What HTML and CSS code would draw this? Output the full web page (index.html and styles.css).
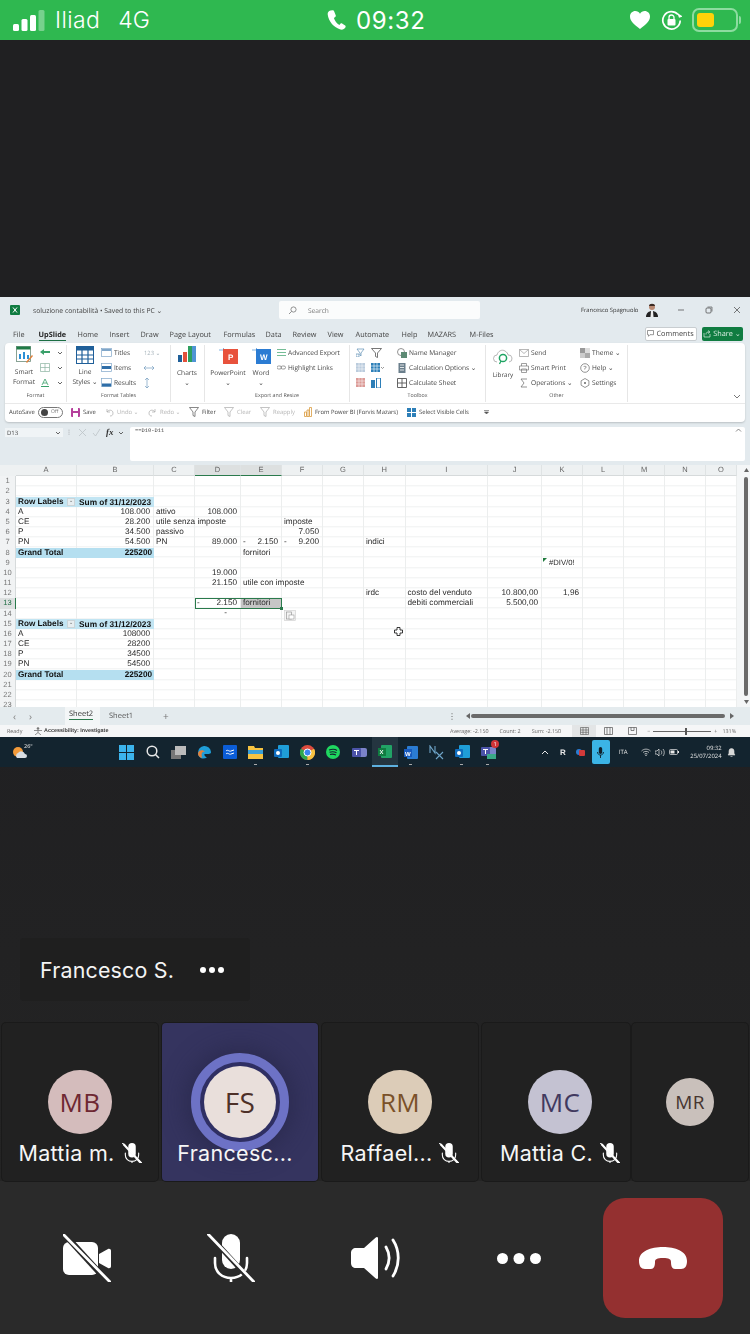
FILE: index.html
```html
<!DOCTYPE html>
<html lang="it">
<head>
<meta charset="utf-8">
<title>Teams call</title>
<link rel="stylesheet" href="styles.css">
</head>
<body>
<svg class="defs" width="0" height="0">
  <symbol id="micoff" viewBox="0 0 48 48">
    <rect x="15" y="0" width="18" height="35" rx="9" fill="#fff"/>
    <path d="M8 24v5c0 9 7 15 16 15s16-6 16-15v-5M24 44v4" fill="none" stroke="#fff" stroke-width="2.6" stroke-linecap="round"/>
    <path d="M4 3l42 46" stroke="currentColor" stroke-width="5"/>
    <path d="M1 0l46 48" stroke="#fff" stroke-width="2.8" stroke-linecap="round"/>
  </symbol>
  <symbol id="dot3" viewBox="0 0 44 11">
    <circle cx="5.500" cy="5.500" r="5.500" fill="#fff"/><circle cx="22" cy="5.500" r="5.500" fill="#fff"/><circle cx="38.500" cy="5.500" r="5.500" fill="#fff"/>
  </symbol>
  <symbol id="caret" viewBox="0 0 6 4"><path d="M1 1l2 2 2-2" fill="none" stroke="#555" stroke-width=".9"/></symbol>
</svg>

<header class="status">
  <div class="st-left">
    <svg class="st-signal" width="32" height="21" viewBox="0 0 32 21"><rect x="0" y="14" width="6" height="7" rx="1.5" fill="#fff"/><rect x="8.500" y="9" width="6" height="12" rx="1.500" fill="#fff"/><rect x="17" y="5" width="6" height="16" rx="1.500" fill="#fff"/><rect x="25.500" y="0" width="6" height="21" rx="1.500" fill="#fff" opacity=".35"/></svg>
    <span class="st-carrier">Iliad</span>
    <span class="st-net">4G</span>
  </div>
  <div class="st-center">
    <svg width="19" height="20" viewBox="0 0 19 20"><path d="M3.500.5C1.500 1 .5 2.500.7 4.500 1.500 11.500 7 17.500 13.500 19.500c2 .5 4-.5 5-2.300.3-.6.200-1.200-.4-1.600l-3-2c-.6-.4-1.200-.3-1.700.2l-1 1.100c-2.600-1.400-4.700-4.200-5.500-7l1.300-.8c.6-.4.800-1 .6-1.600L7.200 1.500C7 .7 6.300.2 5.500.2z" fill="#fff"/></svg>
    <span class="st-time">09:32</span>
  </div>
  <div class="st-right">
    <svg width="20" height="18" viewBox="0 0 20 18"><path d="M10 18C4 13.500 0 10 0 5.500 0 2.300 2.400 0 5.300 0 7.300 0 9 1 10 2.800 11 1 12.700 0 14.700 0 17.600 0 20 2.300 20 5.500 20 10 16 13.500 10 18z" fill="#fff"/></svg>
    <svg width="21" height="21" viewBox="0 0 21 21"><path d="M17 4.500A8.700 8.700 0 1 0 19.200 10.500" fill="none" stroke="#fff" stroke-width="1.700"/><path d="M15 5h5V1z" fill="#fff" transform="rotate(70 17 5)"/><rect x="6.500" y="9" width="8" height="6.500" rx="1" fill="#fff"/><path d="M8 9V7.500a2.500 2.500 0 0 1 5 0V9" fill="none" stroke="#fff" stroke-width="1.300"/></svg>
    <div class="batt"><span class="batt-fill"></span></div>
    <span class="batt-nub"></span>
  </div>
</header>

<main class="stage">
  <section class="share">
    <div class="titlebar">
      <svg class="xl" width="10" height="10" viewBox="0 0 10 10"><rect width="10" height="10" rx="1" fill="#107c41"/><path d="M3 2.500l4 5M7 2.500l-4 5" stroke="#fff" stroke-width="1"/></svg>
      <span class="doc">soluzione contabilità • Saved to this PC ⌄</span>
      <div class="search">
        <svg width="9" height="9" viewBox="0 0 9 9"><circle cx="5.500" cy="3.500" r="2.600" fill="none" stroke="#666" stroke-width=".7"/><path d="M3.500 5.500L1 8" stroke="#666" stroke-width=".7"/></svg>
        <span>Search</span>
      </div>
      <span class="user">Francesco Spagnuolo</span>
      <svg class="user-pic" width="12" height="14" viewBox="0 0 12 14"><circle cx="6" cy="4" r="3" fill="#b98a73"/><path d="M3 3c0-3 6-3 6 0z" fill="#3a2a24"/><path d="M0 14c0-4 3-6 6-6s6 2 6 6z" fill="#222"/><path d="M5 8h2l.5 6h-3z" fill="#eee"/></svg>
      <div class="winbtns">
        <svg width="8" height="8" viewBox="0 0 8 8"><path d="M1 4h6" stroke="#444" stroke-width=".7"/></svg>
        <svg width="8" height="8" viewBox="0 0 8 8"><rect x="1" y="2" width="5" height="5" rx="1" fill="none" stroke="#444" stroke-width=".7"/><path d="M2.500 1H7v4.500" fill="none" stroke="#444" stroke-width=".6"/></svg>
        <svg width="8" height="8" viewBox="0 0 8 8"><path d="M1 1l6 6M7 1L1 7" stroke="#444" stroke-width=".7"/></svg>
      </div>
    </div>

    <nav class="tabs">
      <span class="tab t-file">File</span>
      <span class="tab t-on">UpSlide</span>
      <span class="tab t-home">Home</span>
      <span class="tab t-ins">Insert</span>
      <span class="tab t-draw">Draw</span>
      <span class="tab t-page">Page Layout</span>
      <span class="tab t-form">Formulas</span>
      <span class="tab t-data">Data</span>
      <span class="tab t-rev">Review</span>
      <span class="tab t-view">View</span>
      <span class="tab t-auto">Automate</span>
      <span class="tab t-help">Help</span>
      <span class="tab t-maz">MAZARS</span>
      <span class="tab t-mf">M-Files</span>
      <span class="comments">
        <svg width="7" height="7" viewBox="0 0 7 7"><path d="M.5.500h6v4.200H3L1.500 6.300V4.700h-1z" fill="none" stroke="#555" stroke-width=".6"/></svg>Comments
      </span>
      <span class="sharebtn">
        <svg width="8" height="8" viewBox="0 0 8 8"><path d="M1 3v4h6V4M3 4.500C3 2.500 4 2 6 2M5 .5L7 2 5 3.500" fill="none" stroke="#fff" stroke-width=".6"/></svg>Share ⌄
      </span>
    </nav>

    <div class="ribbon">
      <div class="rib-top">
        <div class="grp g-format">
          <div class="grp-body">
            <div class="big b-smart">
              <svg width="17" height="18" viewBox="0 0 17 18"><rect x=".5" y=".5" width="14" height="15" fill="#fff" stroke="#6b8c7a" stroke-width=".8"/><rect x=".5" y=".5" width="14" height="3" fill="#1e7a46"/><path d="M3 13V8h2v5zM7 13V6h2v7zM11 13V9h2v4z" fill="#2d8fd5"/><path d="M10 16l6-7 1 1-6 7z" fill="#e2813b"/></svg>
              <span>Smart<br>Format</span>
            </div>
            <div class="mini-col">
              <div class="mini"><svg width="10" height="9" viewBox="0 0 10 9"><path d="M0 4l4-3v6zM4 3h6v2H4z" fill="#3aa06a"/></svg><svg class="cr" width="6" height="4"><use href="#caret"/></svg></div>
              <div class="mini"><svg width="10" height="9" viewBox="0 0 10 9"><path d="M.5.500h9v8h-9zM.5 4.500h9M5 .5v8" fill="none" stroke="#8bb3a0" stroke-width=".7"/></svg><svg class="cr" width="6" height="4"><use href="#caret"/></svg></div>
              <div class="mini"><svg width="10" height="9" viewBox="0 0 10 9"><path d="M2 7l3-6 3 6M3 5h4" fill="none" stroke="#3aa06a" stroke-width=".8"/><path d="M1 8.500h8" stroke="#3aa06a"/></svg><svg class="cr" width="6" height="4"><use href="#caret"/></svg></div>
            </div>
          </div>
          <div class="grp-label">Format</div>
        </div>

        <div class="grp g-tables">
          <div class="grp-body">
            <div class="big b-line">
              <svg width="18" height="18" viewBox="0 0 18 18"><rect x=".5" y=".5" width="17" height="17" fill="#fff" stroke="#1f5f99"/><rect x=".5" y=".5" width="17" height="4" fill="#1f5f99"/><path d="M0 9h18M0 13h18M6 4v14M12 4v14" stroke="#1f5f99" stroke-width="1.200"/></svg>
              <span>Line<br>Styles ⌄</span>
            </div>
            <div class="list l-tables">
              <div class="li"><svg width="11" height="9" viewBox="0 0 11 9"><rect x=".5" y=".5" width="10" height="8" fill="#fff" stroke="#7fa6c9" stroke-width=".7"/><rect x="1" y="1" width="9" height="2" fill="#7fa6c9"/></svg>Titles</div>
              <div class="li"><svg width="11" height="9" viewBox="0 0 11 9"><rect x=".5" y=".5" width="10" height="8" fill="#fff" stroke="#7fa6c9" stroke-width=".7"/><rect x="1" y="3" width="9" height="3" fill="#2f6ea8"/></svg>Items</div>
              <div class="li"><svg width="11" height="9" viewBox="0 0 11 9"><rect x=".5" y=".5" width="10" height="8" fill="#fff" stroke="#7fa6c9" stroke-width=".7"/><rect x="1" y="5.500" width="9" height="3" fill="#2f6ea8"/></svg>Results</div>
            </div>
            <div class="list l-num">
              <div class="li li-dim">123 ⌄</div>
              <div class="li"><svg width="10" height="6" viewBox="0 0 10 6"><path d="M0 3h10M2 1L0 3l2 2M8 1l2 2-2 2" fill="none" stroke="#5f8fb5" stroke-width=".6"/></svg></div>
              <div class="li"><svg width="6" height="10" viewBox="0 0 6 10"><path d="M3 0v10M1 2l2-2 2 2M1 8l2 2 2-2" fill="none" stroke="#5f8fb5" stroke-width=".6"/></svg></div>
            </div>
          </div>
          <div class="grp-label">Format Tables</div>
        </div>

        <div class="grp g-charts">
          <div class="grp-body">
            <div class="big b-charts">
              <svg width="18" height="19" viewBox="0 0 18 19"><rect x="0" y="9" width="4" height="7" fill="#1f5f99"/><rect x="5" y="6" width="4" height="10" fill="#e2513b"/><rect x="10" y="0" width="4" height="16" fill="#2d9f5f"/><rect x="14" y="0" width="4" height="16" fill="#4f94d4"/></svg>
              <span>Charts<br>⌄</span>
            </div>
          </div>
        </div>

        <div class="grp g-export">
          <div class="grp-body">
            <div class="big b-ppt">
              <svg width="19" height="19" viewBox="0 0 19 19"><path d="M0 4h6M4 2l2 2-2 2" fill="none" stroke="#4f94d4" stroke-width=".7"/><rect x="4" y="3" width="15" height="15" fill="#e8523c"/><text x="9" y="13.500" class="ico-t">P</text></svg>
              <span>PowerPoint<br>⌄</span>
            </div>
            <div class="big b-word">
              <svg width="19" height="19" viewBox="0 0 19 19"><path d="M0 4h6M4 2l2 2-2 2" fill="none" stroke="#4f94d4" stroke-width=".7"/><rect x="4" y="3" width="15" height="15" fill="#2b7cd3"/><text x="8" y="13.500" class="ico-t">W</text></svg>
              <span>Word<br>⌄</span>
            </div>
            <div class="list l-export">
              <div class="li"><svg width="9" height="9" viewBox="0 0 9 9"><path d="M0 1.500h9M0 4.500h9M0 7.500h9" stroke="#3aa06a" stroke-width=".7"/></svg>Advanced Export</div>
              <div class="li"><svg width="9" height="9" viewBox="0 0 9 9"><rect x="0" y="3" width="4.500" height="3" rx="1.500" fill="none" stroke="#777" stroke-width=".7"/><rect x="4" y="3" width="4.500" height="3" rx="1.500" fill="none" stroke="#777" stroke-width=".7"/></svg>Highlight Links</div>
            </div>
          </div>
          <div class="grp-label">Export and Resize</div>
        </div>

        <div class="grp g-toolbox">
          <div class="grp-body">
            <div class="tb-icons">
              <svg width="9" height="9" viewBox="0 0 9 9"><path d="M1 1h7L5 5v3L4 7V5zM0 6h3v3H0z" fill="none" stroke="#5f8fb5" stroke-width=".7"/></svg>
              <svg width="11" height="10" viewBox="0 0 11 10"><path d="M.5.500h10L6.500 5v4.500l-2-1V5z" fill="none" stroke="#555" stroke-width=".8"/></svg>
              <svg width="9" height="9" viewBox="0 0 9 9"><path d="M0 0h9v9H0z" fill="#bcd" /><path d="M3 0v9M6 0v9M0 3h9M0 6h9" stroke="#fff" stroke-width=".5"/></svg>
              <svg width="13" height="9" viewBox="0 0 13 9"><rect width="9" height="9" fill="#2d7fb8"/><path d="M3 0v9M6 0v9M0 3h9M0 6h9" stroke="#fff" stroke-width=".6"/><path d="M10 4l1.500 1.500L13 4" fill="none" stroke="#555" stroke-width=".6"/></svg>
              <svg width="9" height="9" viewBox="0 0 9 9"><path d="M0 0h9v9H0z" fill="#dc9a96"/><path d="M3 0v9M6 0v9M0 3h9M0 6h9" stroke="#fff" stroke-width=".5"/></svg>
              <svg width="10" height="10" viewBox="0 0 10 10"><rect x="0" y="2" width="4" height="8" fill="#2d7fb8"/><rect x="5.500" y="0" width="4" height="10" fill="none" stroke="#2d7fb8"/></svg>
            </div>
            <div class="list l-tool">
              <div class="li"><svg width="10" height="10" viewBox="0 0 10 10"><circle cx="4" cy="4" r="3.500" fill="none" stroke="#777" stroke-width=".8"/><rect x="4" y="4" width="6" height="6" fill="#5d8a74"/></svg>Name Manager</div>
              <div class="li"><svg width="10" height="10" viewBox="0 0 10 10"><rect x="1.500" y="0" width="7" height="10" fill="#6b7f8c"/><path d="M3 2h4M3 4.500h4M3 7h4" stroke="#fff" stroke-width=".8"/></svg>Calculation Options ⌄</div>
              <div class="li"><svg width="10" height="10" viewBox="0 0 10 10"><path d="M.5.500h9v9h-9zM5 .5v9M.5 5h9" fill="none" stroke="#555" stroke-width=".9"/></svg>Calculate Sheet</div>
            </div>
          </div>
          <div class="grp-label">Toolbox</div>
        </div>

        <div class="grp g-other">
          <div class="grp-body">
            <div class="big b-lib">
              <svg width="20" height="17" viewBox="0 0 20 17"><path d="M4 13a3.500 3.500 0 0 1 0-7C5 2 9 0 12 2c2 1 3 3 3 4a3.500 3.500 0 0 1 1 7" fill="none" stroke="#999" stroke-width=".7"/><circle cx="10" cy="9" r="3.600" fill="none" stroke="#1fa463" stroke-width="1.500"/><path d="M8 12l-1.500 3" stroke="#1fa463" stroke-width="1.300"/></svg>
              <span>Library</span>
            </div>
            <div class="list l-send">
              <div class="li"><svg width="10" height="8" viewBox="0 0 10 8"><path d="M.5.500h9v7h-9zM.5.500L5 4.500 9.500.5" fill="none" stroke="#999" stroke-width=".7"/></svg>Send</div>
              <div class="li"><svg width="10" height="10" viewBox="0 0 10 10"><path d="M2.500 3V.5h5V3M.5 3h9v4h-9zM2.500 6h5v3.500h-5z" fill="none" stroke="#777" stroke-width=".7"/></svg>Smart Print</div>
              <div class="li"><svg width="10" height="10" viewBox="0 0 10 10"><path d="M8 1H2l3 4-3 4h6" fill="none" stroke="#666" stroke-width=".7"/></svg>Operations ⌄</div>
            </div>
            <div class="list l-theme">
              <div class="li"><svg width="10" height="10" viewBox="0 0 10 10"><rect width="5" height="5" fill="#999"/><rect x="5" width="5" height="5" fill="#ddd"/><rect y="5" width="5" height="5" fill="#ccc"/><rect x="5" y="5" width="5" height="5" fill="#aaa"/></svg>Theme ⌄</div>
              <div class="li"><svg width="10" height="10" viewBox="0 0 10 10"><circle cx="5" cy="5" r="4.300" fill="none" stroke="#666" stroke-width=".7"/><text x="3.300" y="7.200" class="ico-q">?</text></svg>Help ⌄</div>
              <div class="li"><svg width="10" height="10" viewBox="0 0 10 10"><path d="M5 .5l3.900 2.300v4.400L5 9.500 1.100 7.200V2.800z" fill="none" stroke="#666" stroke-width=".7"/><circle cx="5" cy="5" r="1" fill="#666"/></svg>Settings</div>
            </div>
          </div>
          <div class="grp-label">Other</div>
        </div>

        <div class="rib-end"><svg width="8" height="5" viewBox="0 0 8 5"><path d="M1 1l3 3 3-3" fill="none" stroke="#555" stroke-width=".8"/></svg></div>
      </div>

      <div class="qat">
        <span class="q q-auto">AutoSave</span>
        <span class="toggle"><i></i>Off</span>
        <span class="q q-save"><svg width="9" height="9" viewBox="0 0 9 9"><rect width="9" height="9" rx="1" fill="#b5409c"/><rect x="2" y="0" width="5" height="3" fill="#fff"/><rect x="2" y="5" width="5" height="4" fill="#fff"/></svg>Save</span>
        <span class="q q-dim q-undo"><svg width="9" height="9" viewBox="0 0 9 9"><path d="M2 1v3h3M2 4c2-3 6-2 6 1 0 2-1 3-3 3" fill="none" stroke="#aaa" stroke-width=".7"/></svg>Undo ⌄</span>
        <span class="q q-dim q-redo"><svg width="9" height="9" viewBox="0 0 9 9"><path d="M7 1v3H4M7 4C5 1 1 2 1 5c0 2 1 3 3 3" fill="none" stroke="#aaa" stroke-width=".7"/></svg>Redo ⌄</span>
        <span class="q q-filter"><svg width="10" height="10" viewBox="0 0 10 10"><path d="M.5.500h9L6 5v4.500l-2-1V5z" fill="none" stroke="#555" stroke-width=".7"/></svg>Filter</span>
        <span class="q q-dim q-clear"><svg width="10" height="10" viewBox="0 0 10 10"><path d="M.5.500h9L6 5v4.500l-2-1V5z" fill="none" stroke="#aaa" stroke-width=".7"/></svg>Clear</span>
        <span class="q q-dim q-reap"><svg width="10" height="10" viewBox="0 0 10 10"><path d="M.5.500h9L6 5v4.500l-2-1V5z" fill="none" stroke="#aaa" stroke-width=".7"/></svg>Reapply</span>
        <span class="q q-pbi"><svg width="8" height="10" viewBox="0 0 8 10"><path d="M.5 5h2v4.500h-2zM3 3h2v6.500H3zM5.500.5h2v9h-2z" fill="none" stroke="#d99a3d" stroke-width=".8"/></svg>From Power BI (Forvis Mazars)</span>
        <span class="q q-vis"><svg width="9" height="9" viewBox="0 0 9 9"><path d="M0 0h4v4H0zM5 0h4v4H5zM0 5h4v4H0zM5 5h4v4H5z" fill="#2d7fb8"/></svg>Select Visible Cells</span>
        <svg class="q-more" width="5" height="5" viewBox="0 0 5 5"><path d="M0 .5h5M.5 2l2 2 2-2z" stroke="#555" stroke-width=".6" fill="#555"/></svg>
      </div>
    </div>

    <div class="fbar">
      <div class="namebox"><span>D13</span><svg width="6" height="4"><use href="#caret"/></svg></div>
      <span class="fb-dots">⋮</span>
      <svg class="fb-x" width="9" height="9" viewBox="0 0 9 9"><path d="M1 1l7 7M8 1L1 8" stroke="#bcc3c7" stroke-width=".8"/></svg>
      <svg class="fb-x" width="9" height="9" viewBox="0 0 9 9"><path d="M1 5l2.500 3L8 1" fill="none" stroke="#bcc3c7" stroke-width=".8"/></svg>
      <span class="fb-fx">fx</span>
      <svg class="fb-c" width="6" height="4"><use href="#caret"/></svg>
      <div class="finput"><span>==D10-D11</span><svg width="7" height="4" viewBox="0 0 7 4"><path d="M1 3.500L3.500 1 6 3.500" fill="none" stroke="#555" stroke-width=".7"/></svg></div>
    </div>

    <div class="sheetwrap">
      <div class="sheet">
        <div class="corner"></div>
        <div class="ch ca">A</div><div class="ch cb">B</div><div class="ch cc">C</div><div class="ch cd sel">D</div><div class="ch ce sel">E</div><div class="ch cf">F</div><div class="ch cg">G</div><div class="ch ch-h">H</div><div class="ch ci">I</div><div class="ch cj">J</div><div class="ch ck">K</div><div class="ch cl">L</div><div class="ch cm">M</div><div class="ch cn">N</div><div class="ch co">O</div>

        <i class="gl ca"></i><i class="gl cb"></i><i class="gl cc"></i><i class="gl cd"></i><i class="gl ce"></i><i class="gl cf"></i><i class="gl cg"></i><i class="gl ch-h"></i><i class="gl ci"></i><i class="gl cj"></i><i class="gl ck"></i><i class="gl cl"></i><i class="gl cm"></i><i class="gl cn"></i><i class="gl co"></i>

        <div class="rh r1">1</div><div class="rh r2">2</div><div class="rh r3">3</div><div class="rh r4">4</div><div class="rh r5">5</div><div class="rh r6">6</div><div class="rh r7">7</div><div class="rh r8">8</div><div class="rh r9">9</div><div class="rh r10">10</div><div class="rh r11">11</div><div class="rh r12">12</div><div class="rh r13 rh-sel">13</div><div class="rh r14">14</div><div class="rh r15">15</div><div class="rh r16">16</div><div class="rh r17">17</div><div class="rh r18">18</div><div class="rh r19">19</div><div class="rh r20">20</div><div class="rh r21">21</div><div class="rh r22">22</div><div class="rh r23">23</div>

        <div class="c r3 ca ph b">Row Labels<span class="fbtn">⌄</span></div><div class="c r3 cb ph b n">Sum of 31/12/2023</div>
        <div class="c r4 ca">A</div><div class="c r4 cb n">108.000</div><div class="c r4 cc">attivo</div><div class="c r4 cd n">108.000</div>
        <div class="c r5 ca">CE</div><div class="c r5 cb n">28.200</div><div class="c r5 cc">utile senza imposte</div><div class="c r5 cf">imposte</div>
        <div class="c r6 ca">P</div><div class="c r6 cb n">34.500</div><div class="c r6 cc">passivo</div><div class="c r6 cf n">7.050</div>
        <div class="c r7 ca">PN</div><div class="c r7 cb n">54.500</div><div class="c r7 cc">PN</div><div class="c r7 cd n">89.000</div><div class="c r7 ce ac"><span>-</span><span>2.150</span></div><div class="c r7 cf ac"><span>-</span><span>9.200</span></div><div class="c r7 ch-h">indici</div>
        <div class="c r8 ca pt b">Grand Total</div><div class="c r8 cb pt b n">225200</div><div class="c r8 ce">fornitori</div>
        <div class="c r9 ck err">#DIV/0!</div>
        <div class="c r10 cd n">19.000</div>
        <div class="c r11 cd n">21.150</div><div class="c r11 ce">utile con imposte</div>
        <div class="c r12 ch-h">irdc</div><div class="c r12 ci">costo del venduto</div><div class="c r12 cj n">10.800,00</div><div class="c r12 ck n">1,96</div>
        <div class="c r13 cd ac"><span>-</span><span>2.150</span></div><div class="c r13 ce fill">fornitori</div><div class="c r13 ci">debiti commerciali</div><div class="c r13 cj n">5.500,00</div>
        <div class="c r14 cd dash">-</div>
        <div class="c r15 ca ph b">Row Labels<span class="fbtn">⌄</span></div><div class="c r15 cb ph b n">Sum of 31/12/2023</div>
        <div class="c r16 ca">A</div><div class="c r16 cb n">108000</div>
        <div class="c r17 ca">CE</div><div class="c r17 cb n">28200</div>
        <div class="c r18 ca">P</div><div class="c r18 cb n">34500</div>
        <div class="c r19 ca">PN</div><div class="c r19 cb n">54500</div>
        <div class="c r20 ca pt b">Grand Total</div><div class="c r20 cb pt b n">225200</div>

        <div class="selbox r13"><i></i></div>
        <svg class="paste" width="12" height="11" viewBox="0 0 12 11"><rect x=".5" y=".5" width="11" height="10" fill="#f4f4f4" stroke="#ccc" stroke-width=".6"/><rect x="2.500" y="2" width="5" height="7" fill="none" stroke="#999" stroke-width=".7"/><rect x="5" y="5" width="5" height="4" fill="#fff" stroke="#999" stroke-width=".6"/></svg>
        <svg class="cursor" width="9" height="9" viewBox="0 0 9 9"><path d="M3 .5h3v2.500h2.500v3H6v2.500H3V6H.5V3H3z" fill="#fff" stroke="#222" stroke-width=".9"/></svg>
      </div>
      <div class="vscroll">
        <svg width="5" height="4" viewBox="0 0 5 4"><path d="M2.500 0L5 4H0z" fill="#666"/></svg>
        <span class="vthumb"></span>
        <svg width="5" height="4" viewBox="0 0 5 4"><path d="M2.500 4L5 0H0z" fill="#666"/></svg>
      </div>
    </div>

    <div class="sheettabs">
      <span class="arrows"><span>‹</span><span>›</span></span>
      <span class="stab stab-on"><b>Sheet2</b></span>
      <span class="stab">Sheet1</span>
      <span class="plus">+</span>
      <span class="kebab">⋮</span>
      <svg width="4" height="6" viewBox="0 0 4 6"><path d="M4 0L0 3l4 3z" fill="#666"/></svg>
      <span class="hthumb"></span>
      <svg width="4" height="6" viewBox="0 0 4 6"><path d="M0 0l4 3-4 3z" fill="#666"/></svg>
    </div>

    <div class="statusline">
      <span class="sl-ready">Ready</span>
      <svg width="8" height="8" viewBox="0 0 8 8"><circle cx="4" cy="1.500" r="1.300" fill="#777"/><path d="M0 3.500h8M4 3v2.500M1 8l3-2.500L7 8" stroke="#777" stroke-width=".8" fill="none"/></svg>
      <b class="sl-acc">Accessibility: Investigate</b>
      <span class="sl-stat sl-first">Average: -2.150</span>
      <span class="sl-stat">Count: 2</span>
      <span class="sl-stat">Sum: -2.150</span>
      <span class="sl-views">
        <span class="vw vw-on"><svg width="9" height="8" viewBox="0 0 9 8"><path d="M.5.500h8v7h-8zM3 .5v7M6 .5v7M.5 3h8M.5 5.300h8" fill="none" stroke="#555" stroke-width=".6"/></svg></span>
        <span class="vw"><svg width="9" height="8" viewBox="0 0 9 8"><path d="M.5.500h8v7h-8zM3 .5v7M6 .5v7" fill="none" stroke="#555" stroke-width=".7"/></svg></span>
        <span class="vw"><svg width="9" height="8" viewBox="0 0 9 8"><path d="M.5.500h8v7h-8zM3 .5v3h3v-3" fill="none" stroke="#555" stroke-width=".7"/></svg></span>
      </span>
      <span class="zoombar">−<span class="track"><i></i></span>+</span>
      <span class="zoomval">131%</span>
    </div>

    <div class="taskbar">
      <div class="tk-weather">
        <svg width="16" height="14" viewBox="0 0 16 14"><circle cx="6" cy="7" r="5" fill="#f29a3a"/><path d="M5 13a3 3 0 0 1 1-5 4 4 0 0 1 7 1 2 2 0 0 1 0 4z" fill="#d8dde2"/></svg>
        <span>26°</span>
      </div>
      <div class="tk-icons">
        <span class="tk"><svg width="15" height="15" viewBox="0 0 15 15"><path d="M0 0h7v7H0zM8 0h7v7H8zM0 8h7v7H0zM8 8h7v7H8z" fill="#3cb4ec"/></svg></span>
        <span class="tk"><svg width="14" height="14" viewBox="0 0 14 14"><circle cx="6" cy="6" r="4.800" fill="none" stroke="#e8e8e8" stroke-width="1.500"/><path d="M9.500 9.500L13 13" stroke="#e8e8e8" stroke-width="1.500"/></svg></span>
        <span class="tk"><svg width="15" height="13" viewBox="0 0 15 13"><rect x="0" y="4" width="10" height="9" fill="#777"/><rect x="4" y="0" width="11" height="9" fill="#bbb"/></svg></span>
        <span class="tk"><svg width="15" height="15" viewBox="0 0 15 15"><path d="M1 8a6.500 6.500 0 0 1 13-1c0 2-2 2-6 2-1 0-1 2 2 3.500C6 15 1 13 1 8z" fill="#1f9ed8"/><path d="M1 9c0-4 5-5 7-2-3-1-4 1-3 6-2-1-4-2-4-4z" fill="#e2813b"/></svg></span>
        <span class="tk"><svg width="14" height="14" viewBox="0 0 14 14"><rect width="14" height="14" rx="1" fill="#0b5dd7"/><path d="M3 6c2-2 3 1 5 0l3-1M3 9c2-2 3 1 5 0l3-1" fill="none" stroke="#fff" stroke-width="1"/></svg></span>
        <span class="tk tk-run"><svg width="15" height="13" viewBox="0 0 15 13"><path d="M0 0h6l1 2h8v11H0z" fill="#f6c341"/><rect y="4" width="15" height="4" fill="#3aa0d8"/></svg></span>
        <span class="tk"><svg width="15" height="14" viewBox="0 0 15 14"><rect x="4" y="0" width="11" height="13" rx="1" fill="#1f9ed8"/><rect x="0" y="4" width="8" height="8" rx="1" fill="#0f6cbd"/><circle cx="4" cy="8" r="2" fill="#fff"/></svg></span>
        <span class="tk tk-run"><svg width="15" height="15" viewBox="0 0 15 15"><circle cx="7.500" cy="7.500" r="7.500" fill="#dd4b3e"/><path d="M7.500 15A7.500 7.500 0 0 1 1 3.700L7.500 7.500z" fill="#2fa84f"/><path d="M7.500 15A7.500 7.500 0 0 0 14 3.700L7.500 7.500z" fill="#f6c341"/><circle cx="7.500" cy="7.500" r="3.500" fill="#3b86f0" stroke="#fff"/></svg></span>
        <span class="tk"><svg width="14" height="14" viewBox="0 0 14 14"><circle cx="7" cy="7" r="7" fill="#1fd760"/><path d="M3 5c3-1 6-1 8 .5M3.500 7.300c2.500-.8 5-.6 7 .5M4 9.500c2-.6 4-.4 6 .4" fill="none" stroke="#12232f" stroke-width="1.100"/></svg></span>
        <span class="tk"><svg width="15" height="13" viewBox="0 0 15 13"><rect x="6" y="2" width="9" height="9" rx="2" fill="#7b83c9"/><rect x="0" y="2" width="9" height="9" rx="1" fill="#4b53a8"/><path d="M2 4.500h5M4.500 4.500V9" stroke="#fff"/></svg></span>
        <span class="tk tk-xl"><svg width="14" height="13" viewBox="0 0 14 13"><rect x="3" y="0" width="11" height="13" rx="1" fill="#21a366"/><rect x="0" y="3" width="8" height="8" fill="#107c41"/><path d="M2 5l3 4M5 5L2 9" stroke="#fff" stroke-width=".9"/></svg></span>
        <span class="tk tk-run"><svg width="14" height="13" viewBox="0 0 14 13"><rect x="3" y="0" width="11" height="13" rx="1" fill="#2b7cd3"/><rect x="0" y="3" width="8" height="8" fill="#185abd"/><text x="1" y="9.500" class="ico-w">W</text></svg></span>
        <span class="tk"><svg width="15" height="15" viewBox="0 0 15 15"><path d="M1 8V1l5 7V1M7 7l7 7M14 7l-7 7" fill="none" stroke="#6fa5c9" stroke-width="1.100"/></svg></span>
        <span class="tk tk-run"><svg width="15" height="14" viewBox="0 0 15 14"><rect x="4" y="0" width="11" height="13" rx="1" fill="#1f9ed8"/><rect x="0" y="4" width="8" height="8" rx="1" fill="#0f6cbd"/><circle cx="4" cy="8" r="2" fill="#fff"/></svg></span>
        <span class="tk tk-run tk-teams"><svg width="15" height="14" viewBox="0 0 15 14"><rect x="6" y="2" width="9" height="9" rx="2" fill="#7b83c9"/><rect x="0" y="2" width="9" height="9" rx="1" fill="#4b53a8"/><path d="M2 4.500h5M4.500 4.500V9" stroke="#fff"/><rect x="6" y="9" width="9" height="5" fill="#3aa887"/></svg><span class="badge">1</span></span>
      </div>
      <div class="tray">
        <svg class="tr-up" width="8" height="5" viewBox="0 0 8 5"><path d="M1 4l3-3 3 3" fill="none" stroke="#e8e8e8"/></svg>
        <span class="tr-r">R</span>
        <svg class="tr-sh" width="9" height="8" viewBox="0 0 9 8"><circle cx="3" cy="4" r="3" fill="#2b7cd3"/><rect x="3" y="2" width="6" height="6" rx="1" fill="#d13a3a"/></svg>
        <span class="tr-mic"><svg width="7" height="11" viewBox="0 0 7 11"><rect x="1.800" y="0" width="3.400" height="7" rx="1.700" fill="#10202c"/><path d="M.5 5c0 4 6 4 6 0M3.500 8v3" fill="none" stroke="#10202c" stroke-width=".9"/></svg></span>
        <span class="tr-ita">ITA</span>
        <svg class="tr-wifi" width="10" height="8" viewBox="0 0 10 8"><path d="M.5 3c2.500-2.500 6.500-2.500 9 0M2 4.500c1.700-1.500 4.300-1.500 6 0M3.500 6c1-.8 2-.8 3 0" fill="none" stroke="#e8e8e8" stroke-width=".7"/><circle cx="5" cy="7.300" r=".7" fill="#e8e8e8"/></svg>
        <svg class="tr-vol" width="10" height="9" viewBox="0 0 10 9"><path d="M0 3h2l2-2v7L2 6H0z" fill="none" stroke="#e8e8e8" stroke-width=".7"/><path d="M6 2.500c1 1 1 3 0 4M8 1c1.700 2 1.700 5 0 7" fill="none" stroke="#e8e8e8" stroke-width=".7"/></svg>
        <svg class="tr-bat" width="10" height="6" viewBox="0 0 10 6"><rect x=".5" y=".5" width="8" height="5" rx="1" fill="none" stroke="#e8e8e8" stroke-width=".7"/><rect x="1.500" y="1.500" width="4" height="3" fill="#e8e8e8"/><rect x="9" y="2" width="1" height="2" fill="#e8e8e8"/></svg>
        <span class="clock"><span>09:32</span><span>25/07/2024</span></span>
        <svg class="tr-bell" width="9" height="11" viewBox="0 0 9 11"><path d="M1 8c1-1 1-2 1-4a2.500 2.500 0 0 1 5 0c0 2 0 3 1 4zM3.500 9.500h2" fill="#d8d8d8" stroke="#d8d8d8" stroke-width=".6"/></svg>
      </div>
    </div>
  </section>

  <div class="chip">
    <span>Francesco S.</span>
    <svg width="24" height="6" viewBox="0 0 44 11"><use href="#dot3"/></svg>
  </div>

  <div class="tiles">
    <article class="tile t-w156">
      <div class="av av-mb">MB</div>
      <div class="tname"><span>Mattia m.</span><svg class="mic-s" width="20" height="20"><use href="#micoff"/></svg></div>
    </article>
    <article class="tile t-w156 tile-on">
      <div class="ring"><div class="av av-fs">FS</div></div>
      <div class="tname tname-off"><span>Francesc...</span></div>
    </article>
    <article class="tile t-w156">
      <div class="av av-rm">RM</div>
      <div class="tname"><span>Raffael...</span><svg class="mic-s" width="20" height="20"><use href="#micoff"/></svg></div>
    </article>
    <article class="tile t-w148">
      <div class="av av-mc">MC</div>
      <div class="tname"><span>Mattia C.</span><svg class="mic-s" width="20" height="20"><use href="#micoff"/></svg></div>
    </article>
    <article class="tile t-w116">
      <div class="av av-mr">MR</div>
    </article>
  </div>
</main>

<footer class="controls">
  <button class="ctl ctl-video" aria-label="Video">
    <svg width="48" height="48" viewBox="0 0 48 48"><rect x="0" y="8" width="35" height="33" rx="6" fill="#fff"/><path d="M36 20l9-5c1.500-.7 3 .2 3 2v15c0 1.800-1.500 2.700-3 2l-9-5z" fill="#fff"/><path d="M3 2l42 46" stroke="#2a2a2a" stroke-width="6"/><path d="M0 0l47 48" stroke="#fff" stroke-width="2.800" stroke-linecap="round"/></svg>
  </button>
  <button class="ctl ctl-mic" aria-label="Microfono">
    <svg width="48" height="48"><use href="#micoff"/></svg>
  </button>
  <button class="ctl ctl-spk" aria-label="Altoparlante">
    <svg width="49" height="44" viewBox="0 0 49 44"><path d="M26 1c.6 0 1 .6 1 1.500v39c0 .9-.4 1.500-1 1.500-.5 0-1-.3-1.500-.8L13 32H5c-3 0-5-2-5-5V17c0-3 2-5 5-5h8L24.500 1.800C25 1.300 25.500 1 26 1z" fill="#fff"/><path d="M35 11c4 7 4 15 0 22M42 4c7 11 7 25 0 36" fill="none" stroke="#fff" stroke-width="2.800" stroke-linecap="round"/></svg>
  </button>
  <button class="ctl ctl-more" aria-label="Altro">
    <svg width="44" height="11"><use href="#dot3"/></svg>
  </button>
  <button class="hang" aria-label="Termina">
    <svg width="48" height="22" viewBox="0 0 48 22"><path d="M0 14C0 4 12 0 24 0s24 4 24 14c0 5-2 8-6 8h-6c-3 0-4-3-4-7 0-3-2-4-8-4s-8 1-8 4c0 4-1 7-4 7H6c-4 0-6-3-6-8z" fill="#fff"/></svg>
  </button>
</footer>
</body>
</html>
```

FILE: styles.css
```css
* { box-sizing: border-box; }
html, body { margin: 0; padding: 0; }
body {
  width: 750px;
  height: 1334px;
  overflow: hidden;
  display: flex;
  flex-direction: column;
  background: #232324;
  font-family: Inter, "Liberation Sans", sans-serif;
  color: #fff;
}
.defs { position: absolute; }
i { font-style: normal; }

/* phone status bar */
.status {
  flex: 0 0 40px;
  display: flex;
  align-items: center;
  background: #2fb850;
  font-family: Inter, sans-serif;
  font-size: 23px;
  color: #fff;
  position: relative;
}
.st-left { display: flex; align-items: center; padding-left: 13px; flex: 0 0 327px; }
.st-carrier { margin-left: 10px; font-weight: 300; letter-spacing: .4px; }
.st-net { margin-left: 18px; font-weight: 300; }
.st-center { display: flex; align-items: center; gap: 10px; flex: 0 0 303px; }
.st-time { font-size: 24px; font-weight: 400; letter-spacing: .6px; }
.st-right { display: flex; align-items: center; }
.st-right svg:nth-child(2) { margin-left: 11px; }
.batt {
  width: 46px; height: 24px; margin-left: 10px;
  border: 2px solid #8ddca0; border-radius: 7px; padding: 3px 0 3px 3px;
}
.batt-fill { display: block; width: 17px; height: 14px; background: #ffd209; border-radius: 3px; }
.batt-nub { width: 2px; height: 8px; background: #8ddca0; border-radius: 0 2px 2px 0; margin-left: 1px; }

/* stage */
.stage {
  flex: 0 0 1141px;
  display: flex;
  flex-direction: column;
  padding-top: 257px;
  background: linear-gradient(#202022 0, #202022 60%, #242424 100%);
}

/* shared screen */
.share {
  height: 470px;
  display: flex;
  flex-direction: column;
  background: #e3eaee;
  color: #333;
  font-family: "Open Sans", "Liberation Sans", sans-serif;
  font-size: 6.6px;
  text-rendering: geometricPrecision;
  filter: blur(.3px);
  overflow: hidden;
}
.titlebar { flex: 0 0 26px; display: flex; align-items: center; padding-left: 10px; }
.doc { margin-left: 13px; width: 246px; color: #444; font-size: 6.800px; }
.search {
  width: 201px; height: 18px; display: flex; align-items: center; gap: 11px; padding-left: 9px;
  background: #fbfcfc; border-radius: 2px; color: #777;
}
.user { margin-left: 101px; font-size: 5.8px; width: 64px; white-space: nowrap; }
.user-pic { margin-left: 1px; }
.winbtns { display: flex; gap: 20px; margin-left: 19px; }

.tabs { flex: 0 0 20px; display: flex; align-items: center; font-size: 7.3px; }
.tab { flex: none; white-space: nowrap; color: #444; padding-top: 4px; }
.t-file { margin-left: 13px; }
.t-on { margin-left: 14px; width: 27px; font-weight: 700; color: #222; border-bottom: 1px solid #1c6e43; }
.t-home { margin-left: 12px; width: 32px; }
.t-ins { width: 31px; }
.t-draw { width: 29px; }
.t-page { width: 54px; }
.t-form { width: 42px; }
.t-data { width: 27px; }
.t-rev { width: 35px; }
.t-view { width: 28px; }
.t-auto { width: 46px; }
.t-help { width: 26px; }
.t-maz { width: 42px; }
.t-mf { width: 175px; }
.comments {
  flex: none; width: 52px; height: 14px; margin-top: 1px; display: flex; align-items: center; justify-content: center; gap: 2px;
  background: #fff; border: 1px solid #c8cdd0; border-radius: 2px; color: #444;
}
.sharebtn {
  flex: none; width: 41px; height: 14px; margin: 1px 0 0 5px; display: flex; align-items: center; justify-content: center; gap: 2px;
  background: #107c41; border-radius: 2px; color: #dff0e6;
}

.ribbon {
  flex: 0 0 79px;
  margin: 0 5px;
  display: flex;
  flex-direction: column;
  background: #fff;
  border-radius: 4px;
  box-shadow: 0 1px 2px rgba(0,0,0,.18);
}
.rib-top { flex: 0 0 58px; display: flex; border-bottom: 1px solid #e9e9e9; }
.grp { display: flex; flex-direction: column; border-right: 1px solid #e6e6e6; margin: 2px 0 1px; }
.grp-body { flex: 1; display: flex; min-height: 0; }
.grp-label { flex: 0 0 10px; text-align: center; font-size: 5.3px; color: #555; line-height: 10px; margin-bottom: 2px; }
.g-format { width: 62px; }
.g-tables { width: 104px; }
.g-charts { width: 34px; }
.g-export { width: 145px; }
.g-toolbox { width: 136px; }
.g-other { width: 142px; }
.rib-end { flex: 1; display: flex; justify-content: flex-end; align-items: flex-end; padding: 0 4px 4px 0; }

.big { display: flex; flex-direction: column; align-items: center; text-align: center; line-height: 9.500px; color: #444; padding-top: 1px; }
.big span { margin-top: 3px; white-space: nowrap; }
.b-smart { width: 30px; margin-left: 4px; }
.b-line { width: 24px; margin-left: 6px; }
.b-charts { width: 32px; }
.b-ppt { width: 38px; margin-left: 4px; }
.b-word { width: 26px; margin-left: 1px; }
.b-lib { width: 24px; margin-left: 5px; padding-top: 4px; }
.b-lib span { margin-top: 4px; font-size: 6.3px; }

.mini-col { display: flex; flex-direction: column; gap: 6px; margin-left: 1px; padding-top: 3px; }
.mini { display: flex; align-items: center; gap: 7px; height: 9px; }
.list { display: flex; flex-direction: column; }
.li { height: 15px; display: flex; align-items: center; gap: 2px; white-space: nowrap; color: #444; font-size: 6.6px; }
.li-dim { color: #a8b4bc; font-size: 5.8px; }
.l-tables { width: 43px; margin-left: 4px; }
.l-export { margin-left: 3px; }
.l-tool { margin-left: 11px; }
.l-send { margin-left: 4px; width: 61px; }
.tb-icons { display: grid; grid-template-columns: 15px 15px; grid-auto-rows: 15px; align-items: center; margin: 0 0 0 6px; height: 45px; }

.ico-t { font-family: "Liberation Sans", sans-serif; font-size: 8px; fill: #fff; font-weight: 700; }
.ico-q { font-family: "Liberation Sans", sans-serif; font-size: 6px; fill: #555; }
.ico-w { font-family: "Liberation Sans", sans-serif; font-size: 6px; fill: #fff; font-weight: 700; }

.qat { flex: 1; display: flex; align-items: center; padding: 0 0 2px 4px; font-size: 5.9px; color: #444; }
.q { flex: none; display: flex; align-items: center; gap: 3px; white-space: nowrap; }
.q-dim { color: #b5b5b5; }
.q-auto { width: 29px; }
.toggle {
  flex: none; width: 25px; height: 11px; display: flex; align-items: center; gap: 3px; padding: 0 2px;
  border: 1px solid #777; border-radius: 6px; color: #777; font-size: 5px;
}
.toggle i { width: 7px; height: 7px; border-radius: 50%; background: #444; }
.q-save { width: 34px; margin-left: 8px; }
.q-undo { width: 43px; }
.q-redo { width: 41px; }
.q-filter { width: 35px; }
.q-clear { width: 36px; }
.q-reap { width: 44px; }
.q-pbi { width: 103px; }
.q-vis { width: 77px; }

.fbar { flex: 0 0 43px; display: flex; padding: 6px 5px 3px; align-items: flex-start; color: #777; font-size: 6px; }
.namebox { width: 58px; height: 9px; padding: 0 2px; display: flex; align-items: center; justify-content: space-between; background: #f0f4f6; font-size: 6px; color: #444; }
.fb-dots { width: 12px; text-align: center; line-height: 9px; }
.fb-x { margin: 0 3px; flex: none; }
.fb-x + .fb-x { margin: 0 3px 0 2px; }
.fb-fx { width: 12px; line-height: 9px; font-family: "Liberation Serif", serif; font-style: italic; font-weight: 700; font-size: 9px; color: #333; padding-left: 2px; }
.fb-c { margin: 3px 6px 0 2px; }
.finput {
  flex: 1; height: 34px; margin-top: -1px; padding: 1px 3px 0 5px; display: flex; justify-content: space-between;
  background: #fff; border-radius: 2px; font-family: "Liberation Mono", monospace; font-size: 5.4px; color: #444; line-height: 7px;
}

.sheetwrap { flex: 0 0 242px; display: flex; background: #fff; overflow: hidden; }
.sheet {
  --rowh: 10.18px;
  flex: 0 0 737px;
  height: 242px;
  position: relative;
  overflow: hidden;
  display: grid;
  grid-template-columns: 16px 61px 77px 41px 46px 41px 41px 41px 41.500px 82.500px 54px 41px 41px 41px 41px 31px;
  grid-template-rows: 11.300px repeat(23, var(--rowh));
  background-color: #fff;
  background-image: repeating-linear-gradient(to bottom, #fff 0, #fff 9.180px, #eff1f1 9.180px, #eff1f1 10.180px);
  background-position: 0 11.300px;
  font-family: "Liberation Sans", Arial, sans-serif;
  font-size: 8.200px;
  color: #2a2a2a;
}
.corner { grid-column: 1; grid-row: 1; background: #eef1f2; }
.ch { grid-row: 1; background: #eef1f2; border-right: 1px solid #dfe3e4; border-bottom: 1px solid #d6dadb; text-align: center; line-height: 10px; color: #666; font-size: 7.500px; }
.ch.sel { background: #dde0e0; border-bottom: 1.500px solid #2a7a4c; }
.gl { grid-row: 2 / -1; border-right: 1px solid #eceeee; }
.ca { grid-column: 2; }
.cb { grid-column: 3; }
.cc { grid-column: 4; }
.cd { grid-column: 5; }
.ce { grid-column: 6; }
.cf { grid-column: 7; }
.cg { grid-column: 8; }
.ch-h { grid-column: 9; }
.ci { grid-column: 10; }
.cj { grid-column: 11; }
.ck { grid-column: 12; }
.cl { grid-column: 13; }
.cm { grid-column: 14; }
.cn { grid-column: 15; }
.co { grid-column: 16; }
.r1 { grid-row: 2; } .r2 { grid-row: 3; } .r3 { grid-row: 4; } .r4 { grid-row: 5; } .r5 { grid-row: 6; } .r6 { grid-row: 7; }
.r7 { grid-row: 8; } .r8 { grid-row: 9; } .r9 { grid-row: 10; } .r10 { grid-row: 11; } .r11 { grid-row: 12; } .r12 { grid-row: 13; }
.r13 { grid-row: 14; } .r14 { grid-row: 15; } .r15 { grid-row: 16; } .r16 { grid-row: 17; } .r17 { grid-row: 18; } .r18 { grid-row: 19; }
.r19 { grid-row: 20; } .r20 { grid-row: 21; } .r21 { grid-row: 22; } .r22 { grid-row: 23; } .r23 { grid-row: 24; }
.rh { grid-column: 1; background: #f1f3f4; border-right: 1px solid #d6dadb; text-align: center; font-size: 7.500px; line-height: 10px; color: #777; }
.rh-sel { background: #dde0e0; color: #1f6e43; border-right: 1.500px solid #2a7a4c; }
.c { padding: 0 2px; line-height: 10.180px; white-space: nowrap; min-width: 0; }
.n { text-align: right; padding-right: 4px; }
.b { font-weight: 700; color: #111; }
.ph { background: #c2e5f3; display: flex; justify-content: space-between; align-items: center; padding-right: 2px; }
.ph.n { display: block; padding-right: 3px; font-size: 8.300px; }
.pt { background: #b5dff0; }
.pt.n { padding-right: 2px; }
.fbtn { width: 8px; height: 8px; background: #e7eef1; border: 1px solid #cbd4d8; font-size: 5px; line-height: 4px; text-align: center; color: #555; font-weight: 400; }
.ac { display: flex; justify-content: space-between; padding-right: 4px; }
.fill { background: #c6c6c6; }
.err { padding-left: 7px; font-size: 7.700px; position: relative; }
.err::before { content: ""; position: absolute; left: 1px; top: 0; border-top: 4px solid #1f7a3d; border-right: 4px solid transparent; }
.dash { text-align: center; padding-left: 17px; line-height: 8px; }
.selbox { grid-column: 5 / 7; border: 1.300px solid #2a7a4c; position: relative; }
.selbox i { position: absolute; right: -2px; bottom: -2px; width: 3px; height: 3px; background: #2a7a4c; }
.paste { position: absolute; left: 284px; top: 145px; }
.cursor { position: absolute; left: 394px; top: 162px; }

.vscroll { flex: 1; display: flex; flex-direction: column; align-items: center; justify-content: space-between; padding: 3px 0 3px 5px; background: #f4f6f7; }
.vthumb { width: 4.500px; height: 219px; border-radius: 3px; background: #6a6a6a; }

.sheettabs { flex: 0 0 18px; display: flex; align-items: center; background: #e4ebee; font-size: 7.500px; color: #555; }
.arrows { display: flex; gap: 13px; width: 65px; padding-left: 13px; font-size: 10px; color: #888; }
.stab { width: 44px; padding-left: 9px; }
.stab-on { width: 35px; height: 18px; padding: 2px 0 0 4px; background: #f3f6f7; color: #333; }
.stab-on b { font-weight: 400; border-bottom: 1px solid #2a7a4c; }
.plus { margin-left: 19px; width: 285px; font-size: 10px; color: #777; }
.kebab { width: 18px; font-size: 8px; color: #555; }
.hthumb { width: 254px; height: 4px; margin: 0 5px 0 1px; border-radius: 2px; background: #6a6a6a; }

.statusline { flex: 0 0 12px; display: flex; align-items: center; padding-left: 7px; background: #f5f6f7; font-size: 5.400px; color: #666; }
.sl-ready { width: 27px; }
.sl-acc { margin-left: 2px; width: 406px; font-family: "Liberation Sans", sans-serif; font-weight: 700; color: #444; white-space: nowrap; }
.sl-stat { margin-right: 11px; white-space: nowrap; }
.sl-views { display: flex; }
.vw { width: 24px; height: 12px; display: flex; align-items: center; justify-content: center; }
.vw-on { background: #e3e5e6; }
.zoombar { display: flex; align-items: center; gap: 3px; margin-left: 3px; }
.track { width: 58px; height: 1px; background: #666; position: relative; }
.track i { position: absolute; left: 32px; top: -3px; width: 2px; height: 7px; background: #555; }
.zoomval { margin-left: 5px; }

.taskbar { flex: 0 0 30px; display: flex; align-items: center; background: #13242f; color: #e8e8e8; font-size: 6px; font-family: "Open Sans", sans-serif; }
.tk-weather { width: 114px; padding-left: 12px; display: flex; align-items: flex-start; }
.tk-weather span { margin: -3px 0 0 -4px; font-size: 5.500px; }
.tk-icons { display: flex; width: 421px; height: 30px; }
.tk { width: 25.800px; flex: none; height: 30px; position: relative; display: flex; align-items: center; justify-content: center; }
.tk-run::after { content: ""; position: absolute; bottom: 2px; left: 11px; width: 3px; height: 1.500px; background: #aaa; }
.tk-xl { background: #243540; border-bottom: 2px solid #5db0df; }
.badge { position: absolute; top: 3px; right: 2px; width: 8px; height: 8px; border-radius: 50%; background: #d13438; color: #fff; font-size: 5.500px; line-height: 8px; text-align: center; }
.tray { flex: 1; display: flex; align-items: center; height: 30px; }
.tr-up { margin-left: 6px; }
.tr-r { margin-left: 11px; font-family: "Liberation Sans", sans-serif; font-weight: 700; font-size: 8px; }
.tr-sh { margin-left: 10px; }
.tr-mic { width: 18px; height: 24px; margin-left: 7px; display: flex; align-items: center; justify-content: center; background: #3bb4e6; border-radius: 2px; }
.tr-ita { margin-left: 9px; font-size: 6px; }
.tr-wifi { margin-left: 13px; }
.tr-vol { margin-left: 4px; }
.tr-bat { margin-left: 4px; }
.clock { width: 37px; margin-left: 6px; display: flex; flex-direction: column; align-items: flex-end; line-height: 8.500px; font-size: 5.900px; white-space: nowrap; }
.tr-bell { margin-left: 5px; }

/* call chip */
.chip {
  width: 230px; height: 63px; margin: 171px 0 22px 20px; padding-left: 20px;
  display: flex; align-items: center; gap: 26px;
  background: #1f1f1f; border-radius: 4px;
  font-size: 21.400px; letter-spacing: .2px; color: #f4f4f4;
}

/* tiles */
.tiles { display: flex; gap: 4px; padding-left: 2px; height: 158px; }
.tile {
  display: flex; flex-direction: column; align-items: center; justify-content: flex-start;
  height: 158px; padding-top: 47px; position: relative;
  background: #212121; border-radius: 4px; box-shadow: 0 0 0 1px #1a1a1a;
  color: #212121;
}
.t-w156 { width: 156px; }
.t-w148 { width: 148px; padding-left: 8px; }
.t-w116 { width: 116px; margin-left: -2px; padding-top: 55px; }
.tile-on { background: #35345f; color: #35345f; }
.av {
  width: 64px; height: 64px; flex: none; border-radius: 50%;
  display: flex; align-items: center; justify-content: center;
  font-family: "Open Sans", sans-serif; font-size: 26px; font-weight: 500; letter-spacing: .3px;
}
.av-mb { background: #d4bcbc; color: #6d2732; }
.av-fs { width: 72px; height: 72px; background: #e9dfdb; color: #4d3028; font-size: 28px; }
.av-rm { background: #dcccb8; color: #7a5129; }
.av-mc { background: #c4c2d2; color: #41395f; }
.av-mr { width: 48px; height: 48px; background: #c9c0bb; color: #463530; font-size: 19px; }
.ring {
  width: 98px; height: 98px; margin: -17px 0 -17px; flex: none; border-radius: 50%;
  border: 9px solid #6d72c5; background: #2f2f63;
  display: flex; align-items: center; justify-content: center;
  box-shadow: 0 0 22px 6px rgba(36,36,70,.55);
}
.tname {
  display: flex; align-items: center; gap: 7px; margin-top: 6px; height: 26px;
  font-size: 21.500px; letter-spacing: .3px; color: #f6f6f6; white-space: nowrap; z-index: 1;
}
.tname-off { margin-right: 10px; }
.mic-s { flex: none; }

/* bottom controls */
.controls {
  flex: 1;
  display: flex;
  align-items: flex-start;
  padding-top: 53px;
  background: #2a2a2a;
}
.ctl { width: 48px; height: 48px; padding: 0; border: 0; background: none; display: flex; align-items: center; justify-content: center; color: #2a2a2a; }
.ctl-video { margin-left: 63px; }
.ctl-mic { margin-left: 96px; }
.ctl-spk { margin-left: 96px; width: 49px; }
.ctl-more { margin-left: 97px; width: 44px; }
.hang {
  width: 120px; height: 120px; margin: -36px 0 0 62px; padding: 0; border: 0;
  display: flex; align-items: center; justify-content: center;
  background: #943030; border-radius: 22px;
}
```
